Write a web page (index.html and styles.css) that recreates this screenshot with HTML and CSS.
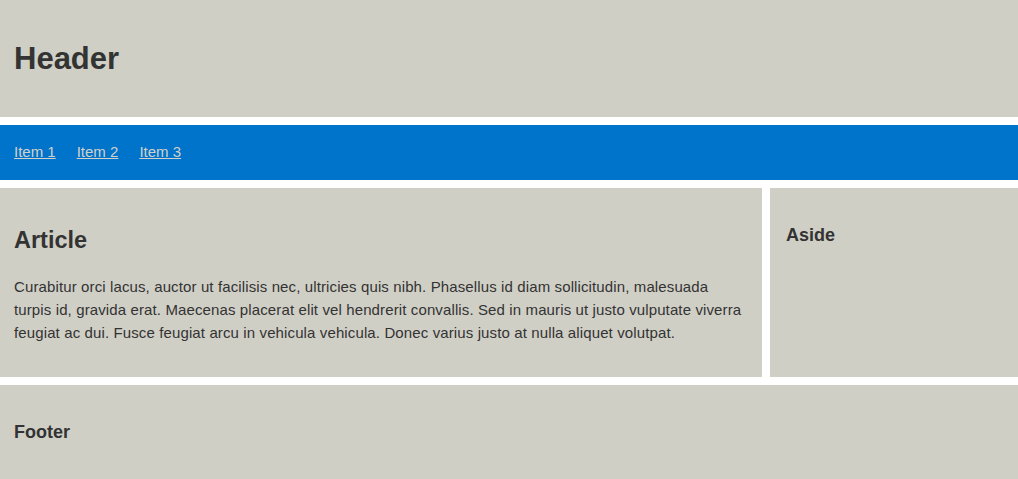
FILE: index.html
```html
<!DOCTYPE html>
<html lang="en">
<head>
<meta charset="utf-8">
<title>Layout</title>
<link rel="stylesheet" href="styles.css">
</head>
<body>
<div class="page">
  <header class="header">
    <h1 class="header-title">Header</h1>
  </header>
  <nav class="nav">
    <a class="nav-link" href="#">Item 1</a>
    <a class="nav-link" href="#">Item 2</a>
    <a class="nav-link" href="#">Item 3</a>
  </nav>
  <article class="article">
    <h2 class="article-title">Article</h2>
    <p class="article-text">Curabitur orci lacus, auctor ut facilisis nec, ultricies quis nibh. Phasellus id diam sollicitudin, malesuada turpis id, gravida erat. Maecenas placerat elit vel hendrerit convallis. Sed in mauris ut justo vulputate viverra feugiat ac dui. Fusce feugiat arcu in vehicula vehicula. Donec varius justo at nulla aliquet volutpat.</p>
  </article>
  <aside class="aside">
    <h3 class="aside-title">Aside</h3>
  </aside>
  <footer class="footer">
    <h3 class="footer-title">Footer</h3>
  </footer>
</div>
</body>
</html>
```

FILE: styles.css
```css
html, body {
  margin: 0;
  padding: 0;
  background: #ffffff;
}
body {
  font-family: "Liberation Sans", Arial, Helvetica, sans-serif;
  color: #333333;
}
.page {
  display: grid;
  grid-template-columns: 1fr 248px;
  gap: 8px;
}
.header, .nav, .footer {
  grid-column: 1 / -1;
}
.header, .article, .aside, .footer {
  background: #d0cfc6;
}
.header {
  padding: 40px 14px;
}
.header-title {
  margin: 0;
  font-size: 31px;
  line-height: 37px;
  font-weight: bold;
}
.nav {
  background: #0073cb;
  padding: 18px 14px 20px;
  display: flex;
  gap: 21px;
}
.nav-link {
  color: #d2d1c9;
  font-size: 15px;
  line-height: 17px;
  text-decoration: underline;
}
.article {
  padding: 38px 17px 33px 14px;
}
.article-title {
  margin: 0 0 21px;
  font-size: 23.5px;
  line-height: 28px;
  font-weight: bold;
}
.article-text {
  margin: 0;
  font-size: 15px;
  line-height: 23px;
  letter-spacing: 0.12px;
}
.aside {
  padding: 37px 16px;
}
.aside-title, .footer-title {
  margin: 0;
  font-size: 18px;
  line-height: 21px;
  font-weight: bold;
}
.footer {
  padding: 37px 14px 36px;
}
```
